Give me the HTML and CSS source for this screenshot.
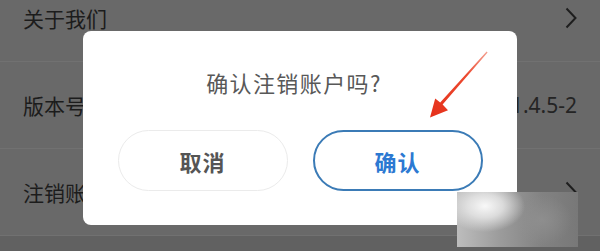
FILE: index.html
```html
<!DOCTYPE html>
<html lang="zh-CN">
<head>
<meta charset="utf-8">
<title>确认注销账户</title>
<link rel="stylesheet" href="styles.css">
</head>
<body>
<div class="screen">
  <ul class="list">
    <li class="row">
      <span class="label">关于我们</span>
      <svg class="chev" viewBox="0 0 12 22" width="12" height="22"><polyline points="1.5,1.5 10.5,11 1.5,20.5" fill="none" stroke="#1e1e1e" stroke-width="2"/></svg>
    </li>
    <li class="row">
      <span class="label">版本号</span>
      <span class="value">1.4.5-2</span>
    </li>
    <li class="row">
      <span class="label">注销账户</span>
      <svg class="chev" viewBox="0 0 12 22" width="12" height="22"><polyline points="1.5,1.5 10.5,11 1.5,20.5" fill="none" stroke="#1e1e1e" stroke-width="2"/></svg>
    </li>
  </ul>

  <div class="dialog">
    <p class="title">确认注销账户吗?</p>
    <div class="actions">
      <button class="btn btn-cancel">取消</button>
      <button class="btn btn-ok">确认</button>
    </div>
  </div>

  <svg class="arrow" viewBox="0 0 600 251" width="600" height="251">
    <defs>
      <linearGradient id="ag" x1="487" y1="52" x2="430" y2="117" gradientUnits="userSpaceOnUse">
        <stop offset="0" stop-color="#f4a090"/>
        <stop offset="0.35" stop-color="#ec4a30"/>
        <stop offset="1" stop-color="#e5301a"/>
      </linearGradient>
    </defs>
    <polygon fill="url(#ag)" points="487.6,52.4 442.6,104.6 448,110.2 430,117.5 435.2,98.6 440.2,102.4 486.6,51.6"/>
  </svg>

  <div class="blur"></div>
</div>
</body>
</html>
```
FILE: styles.css
```css
* { box-sizing: border-box; }
html, body {
  margin: 0;
  padding: 0;
  width: 600px;
  height: 251px;
  overflow: hidden;
  background: #616161;
  font-family: "Noto Sans CJK SC", "Noto Sans", sans-serif;
}
.screen {
  position: relative;
  width: 600px;
  height: 251px;
  overflow: hidden;
  background: #616161;
}
.list {
  list-style: none;
  margin: -25px 0 0 0;
  padding: 0;
  display: flex;
  flex-direction: column;
}
.row {
  height: 87px;
  display: flex;
  align-items: center;
  justify-content: space-between;
  padding: 0 23px;
  background: #696969;
  border-bottom: 1px solid #717171;
}
.label {
  font-size: 21px;
  color: #1c1c1c;
  line-height: 1;
}
.value {
  font-size: 21px;
  color: #242424;
  line-height: 1;
  font-family: "Noto Sans", "Noto Sans CJK SC", sans-serif;
}
.chev { display: block; }

.dialog {
  position: absolute;
  left: 83px;
  top: 31px;
  width: 434px;
  height: 194px;
  background: #ffffff;
  border-radius: 8px;
  display: flex;
  flex-direction: column;
  align-items: center;
}
.title {
  margin: 36px 0 33px;
  line-height: 30px;
  height: 30px;
  font-size: 22px;
  letter-spacing: 1.4px;
  color: #585858;
  padding-right: 12px;
}
.actions {
  display: flex;
  gap: 25px;
}
.btn {
  width: 170px;
  height: 61px;
  border-radius: 31px;
  background: #fff;
  font-family: "Noto Sans CJK SC", sans-serif;
  font-size: 22px;
  font-weight: 700;
  padding: 0;
  letter-spacing: 1px;
}
.btn-cancel {
  border: 1.5px solid #ebebeb;
  color: #555555;
}
.btn-ok {
  border: 2px solid #3b7bb6;
  color: #2c79d2;
}
.arrow {
  position: absolute;
  left: 0;
  top: 0;
  pointer-events: none;
}
.blur {
  position: absolute;
  left: 457px;
  top: 192px;
  width: 121px;
  height: 55px;
  background:
    radial-gradient(ellipse 40px 26px at 28px 14px, rgba(248,248,248,1) 0%, rgba(230,230,230,0.85) 45%, rgba(200,200,200,0) 100%),
    radial-gradient(ellipse 30px 25px at 85px 28px, rgba(145,145,145,0.8) 0%, rgba(130,130,130,0) 100%),
    linear-gradient(90deg, #bdbdbd 0%, #9c9c9c 35%, #828282 70%, #787878 100%);
}
```
